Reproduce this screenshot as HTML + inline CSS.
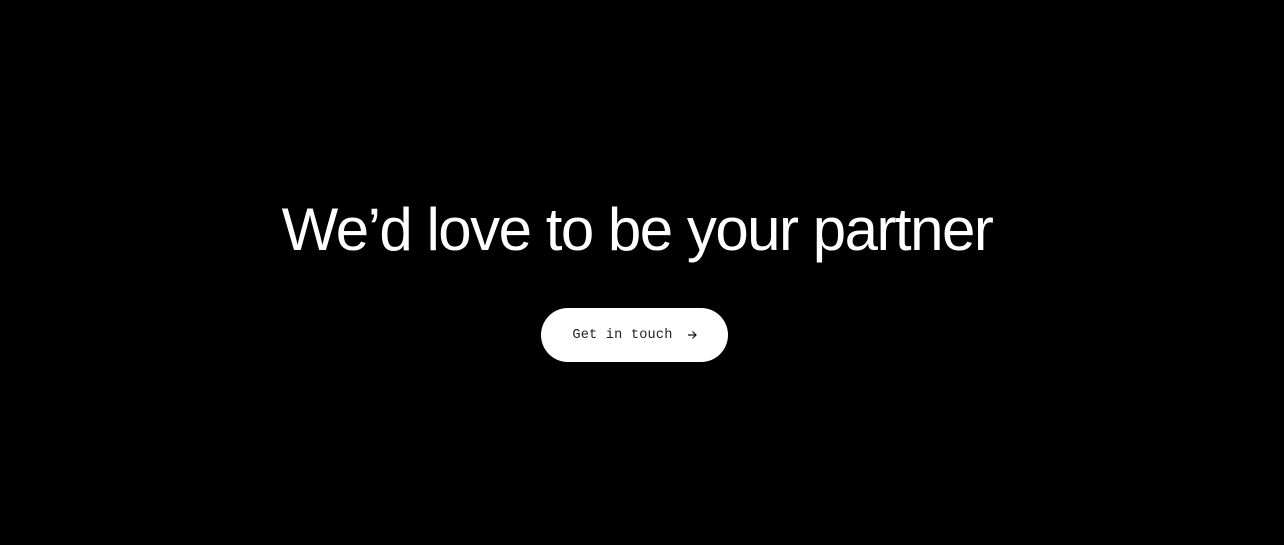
<!DOCTYPE html>
<html><head><meta charset="utf-8"><style>
html,body{margin:0;padding:0;background:#000;width:1284px;height:545px;overflow:hidden}
h1{position:absolute;left:-5px;width:1284px;top:190px;margin:0;text-align:center;color:#fff;font-family:"Liberation Sans",sans-serif;font-weight:400;font-size:60px;letter-spacing:-1.5px;line-height:80px}
.btn{position:absolute;left:541px;top:308px;width:187px;height:54px;border-radius:27px;background:#fff;color:#222;font-family:"Liberation Mono",monospace;font-size:13.6px;display:flex;align-items:center;justify-content:center;gap:14px;letter-spacing:0.2px}
</style></head><body>
<h1>We’d love to be your partner</h1>
<div class="btn"><span>Get in touch</span><svg width="10" height="10" viewBox="0 0 10 10"><path d="M1 5H9M5.5 1.5L9 5L5.5 8.5" stroke="#111" stroke-width="1.2" fill="none"/></svg></div>
</body></html>
